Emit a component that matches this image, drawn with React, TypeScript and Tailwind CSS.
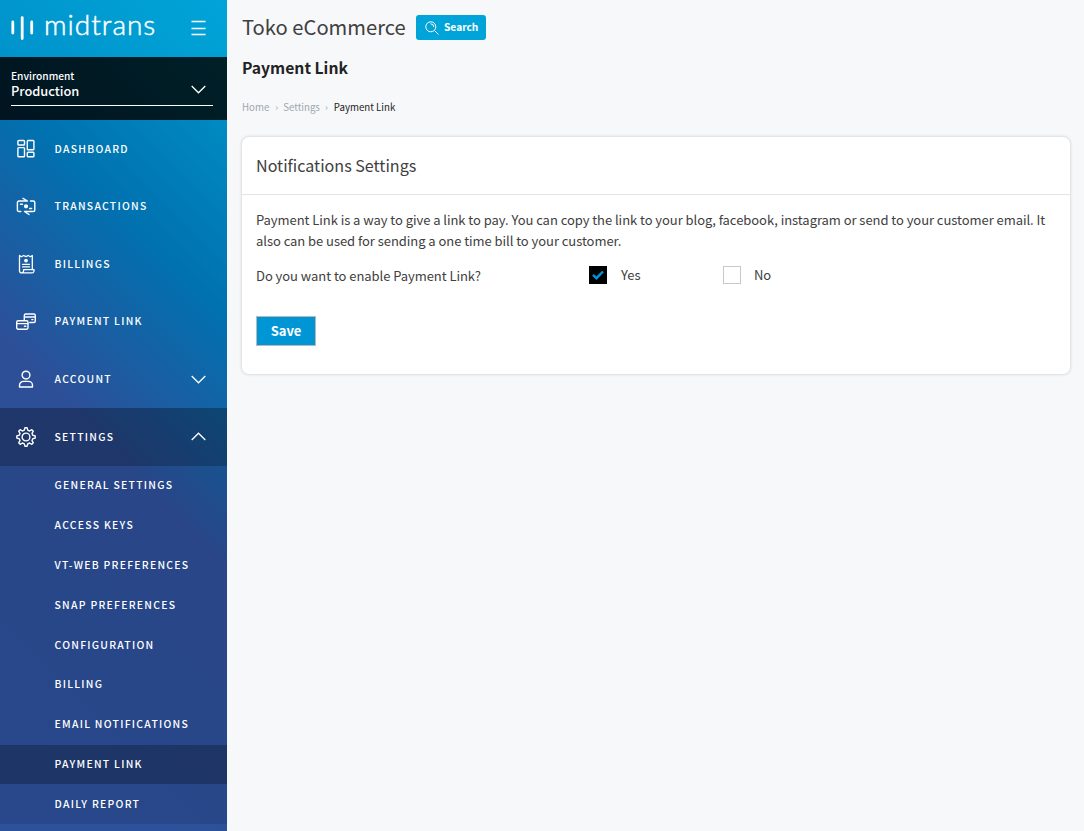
import type { ReactNode } from "react";

function Icon({ children }: { children: ReactNode }) {
  return (
    <svg
      className="h-5 w-5 shrink-0"
      viewBox="0 0 20 20"
      fill="none"
      stroke="currentColor"
      strokeWidth="1.4"
      strokeLinecap="round"
      strokeLinejoin="round"
    >
      {children}
    </svg>
  );
}

const icons = {
  dashboard: (
    <Icon>
      <rect x="1.900" y="1.500" width="6.600" height="4.500" rx="0.800" />
      <rect x="11.300" y="1.500" width="6.600" height="9.200" rx="0.800" />
      <rect x="1.900" y="8.600" width="6.600" height="9.200" rx="0.800" />
      <rect x="11.300" y="13.300" width="6.600" height="4.500" rx="0.800" />
    </Icon>
  ),
  transactions: (
    <Icon>
      <path d="M4.800 15.500H3A1.600 1.600 0 0 1 1.400 13.900V6.600A1.600 1.600 0 0 1 3 5H11.500L7 2.300" />
      <path d="M14.500 5H17.200a1.600 1.600 0 0 1 1.600 1.600v7.300a1.600 1.600 0 0 1-1.600 1.600H8.500l4.500 3" />
      <path d="M4.500 8.200h2M13.600 12.500h2" />
      <circle cx="10" cy="10.300" r="1.400" fill="currentColor" />
    </Icon>
  ),
  billings: (
    <Icon>
      <path d="M3.500 16V1.500l1.900 1.200 2.200-1.200 2.300 1.200 2.300-1.200 2.200 1.200 1.900-1.200V15.500" strokeWidth="1.300" />
      <path d="M3.500 16v.7a2 2 0 0 0 2 2.200H16a1.900 1.900 0 0 0 2-2v-1.200H7.600v1.100a2 2 0 0 1-2.100 2.100" strokeWidth="1.300" />
      <path d="M6.500 10.300h7M6.500 12.900h7" strokeWidth="1.200" />
      <circle cx="10" cy="6.600" r="1.200" fill="currentColor" />
    </Icon>
  ),
  link: (
    <Icon>
      <path d="M8.300 8V3.500A1.500 1.500 0 0 1 9.800 2h8A1.500 1.500 0 0 1 19.300 3.500v5.500A1.500 1.500 0 0 1 17.800 10.500h-4M8.300 5h11M15.800 7.600h1.200" />
      <rect x="0.700" y="8.800" width="11.300" height="8.400" rx="1.400" />
      <path d="M0.700 11.600h11.300M8.500 14.300h1.300" />
    </Icon>
  ),
  account: (
    <Icon>
      <circle cx="10" cy="6.100" r="3.900" />
      <path d="M3.500 18v-1.600a4 4 0 0 1 4-4h5a4 4 0 0 1 4 4v1.600z" />
    </Icon>
  ),
  settings: (
    <Icon>
      <circle cx="10" cy="10" r="3.900" />
      <path d="M8.900 0.800h2.200l.6 2.400 1.900.8 2.200-1.300 1.500 1.500-1.300 2.200.8 1.900 2.400.6v2.200l-2.400.6-.8 1.900 1.300 2.200-1.500 1.500-2.200-1.300-1.900.8-.6 2.400H8.900l-.6-2.400-1.900-.8-2.200 1.300-1.500-1.500L4 13.600l-.8-1.900-2.400-.6V8.900l2.400-.6L4 6.400 2.700 4.200l1.500-1.500L6.400 4l1.900-.8z" />
    </Icon>
  ),
};

function Chevron({ up = false }: { up?: boolean }) {
  return (
    <svg className="h-[9px] w-[15px] shrink-0" viewBox="0 0 15 9" fill="none" stroke="currentColor" strokeWidth="1.3">
      <path d={up ? "M.7 8 7.500 1.200 14.300 8" : "M.7 1 7.500 7.800 14.300 1"} />
    </svg>
  );
}

const menu = [
  { label: "DASHBOARD", icon: icons.dashboard },
  { label: "TRANSACTIONS", icon: icons.transactions },
  { label: "BILLINGS", icon: icons.billings },
  { label: "PAYMENT LINK", icon: icons.link },
  { label: "ACCOUNT", icon: icons.account, chevron: "down" },
  { label: "SETTINGS", icon: icons.settings, chevron: "up" },
];

const submenu = [
  "GENERAL SETTINGS",
  "ACCESS KEYS",
  "VT-WEB PREFERENCES",
  "SNAP PREFERENCES",
  "CONFIGURATION",
  "BILLING",
  "EMAIL NOTIFICATIONS",
  "PAYMENT LINK",
  "DAILY REPORT",
];

function Sidebar() {
  return (
    <aside className="flex w-[227px] shrink-0 flex-col overflow-hidden bg-[linear-gradient(45deg,#2d519b_0px,#2d4f98_350px,#0072b0_527px,#009acf_748px)] text-white">
      <div className="flex h-[57px] shrink-0 items-center bg-[linear-gradient(45deg,#0093cb,#00a4d8)] pl-[11px] pr-[21px]">
        <svg className="mt-[-2px] h-6 w-[23px] shrink-0" viewBox="0 0 23 24" stroke="white" strokeWidth="2.800" strokeLinecap="round">
          <path d="M1.800 6v11M11.200 1.600v21M20.700 6v11" />
        </svg>
        <span className="ml-[10px] mt-[-9px] w-[114px] whitespace-nowrap font-['Lato'] text-[28px] font-light leading-none tracking-[1px] [-webkit-text-stroke:0.5px_white]">midtrans</span>
        <svg className="ml-auto mt-[-1px] h-4 w-[15px]" viewBox="0 0 15 16" stroke="white" strokeWidth="1.300">
          <path d="M.5 1.500h14M.5 8.500h14M.5 14.500h14" />
        </svg>
      </div>
      <div className="h-[63px] shrink-0 bg-[linear-gradient(45deg,#001420,#002028)] pl-[11px] pr-[14px] pt-3">
        <div className="flex h-[37px] items-start justify-between border-b border-white pr-[7px]">
          <div className="mt-[-1px] flex flex-col">
            <span className="text-[10.200px] font-medium leading-[15px]">Environment</span>
            <span className="text-[12.800px] font-medium leading-[15px]">Production</span>
          </div>
          <div className="pt-[16px]"><Chevron /></div>
        </div>
      </div>
      <nav className="shrink-0">
        {menu.map((m) => (
          <div
            key={m.label}
            className={`flex items-center pl-4 pr-[21px] ${m.chevron === "up" ? "h-[58px] bg-black/30" : "h-[57.6px]"}`}
          >
            {m.icon}
            <span className="ml-[18.500px] flex-1 pb-[0.6px] text-[10.400px] font-medium tracking-[1.280px]">{m.label}</span>
            {m.chevron && <Chevron up={m.chevron === "up"} />}
          </div>
        ))}
      </nav>
      <div className="shrink-0 bg-black/10">
        {submenu.map((s, i) => (
          <div
            key={s}
            className={`flex h-[39.8px] items-center pb-[1.4px] pl-[54.5px] text-[10.400px] font-medium tracking-[1.280px] ${i === 7 ? "bg-black/25" : ""}`}
          >
            {s}
          </div>
        ))}
      </div>
    </aside>
  );
}

export default function App() {
  return (
    <div className="flex h-[831px] w-[1084px] overflow-hidden bg-[#f7f8fa] font-['Noto_Sans_CJK_SC','Noto_Sans',sans-serif] text-[#404040]">
      <Sidebar />
      <main className="flex min-w-0 flex-1 flex-col pl-[14px] pr-[13px]">
        <header className="mt-[15px] flex h-[25px] items-center pl-px">
          <h1 className="w-[163px] whitespace-nowrap pb-[2px] text-[20.200px] leading-[25px]">Toko eCommerce</h1>
          <button className="ml-[11px] flex h-[25px] w-[70px] items-center rounded-[3px] bg-[#00a4d8] pl-[9px] text-white">
            <svg className="h-[14px] w-[14px]" viewBox="0 0 14 14" fill="none" stroke="white" strokeWidth="1">
              <circle cx="5.800" cy="5.800" r="5" />
              <path d="M5.500 2.800a3.200 3.200 0 0 1 3.300 3.300M9.500 9.500l4 4" />
            </svg>
            <span className="ml-[5px] mt-[-1px] text-[10.200px] font-bold">Search</span>
          </button>
        </header>
        <h2 className="mt-[15px] pl-px text-[15.700px] font-bold leading-[26px] text-[#222]">Payment Link</h2>
        <div className="mt-[18px] flex h-4 items-center pl-px text-[9.700px] text-[#9ca7ae]">
          <span>Home</span>
          <span className="ml-[6px] mr-[5px]">›</span>
          <span>Settings</span>
          <span className="ml-[5px] mr-[6px]">›</span>
          <span className="text-[#222]">Payment Link</span>
        </div>
        <section className="mt-[21px] h-[239px] rounded-[8px] border border-[#e3e4e5] bg-white shadow-[0_0_3px_rgba(0,0,0,0.1)]">
          <div className="flex h-[58px] items-center border-b border-[#e3e4e5] px-[14px] text-[16.100px]">Notifications Settings</div>
          <div className="px-[14px] pt-[14px] text-[13px] leading-[21px] tracking-[-0.050px]">
            <p className="whitespace-nowrap">
              Payment Link is a way to give a link to pay. You can copy the link to your blog, facebook, instagram or send to your customer email. It
              <br />
              also can be used for sending a one time bill to your customer.
            </p>
            <div className="mt-[13px] flex h-[22px] items-center">
              <span className="w-[333px] pt-px">Do you want to enable Payment Link?</span>
              <span className="flex w-[134px] items-center">
                <span className="flex h-[18px] w-[18px] items-center justify-center bg-black">
                  <svg className="h-[10px] w-3" viewBox="0 0 12 10" fill="none" stroke="#0096d6" strokeWidth="2.400">
                    <path d="M1 4.800 4.500 8.200 11 1.500" />
                  </svg>
                </span>
                <span className="ml-[14px] mt-[-1px]">Yes</span>
              </span>
              <span className="h-[18px] w-[18px] border border-[#c8c8c8] bg-white" />
              <span className="ml-[13px] mt-[-1px]">No</span>
            </div>
            <button className="mt-[30px] flex h-[30px] w-[60px] items-center justify-center border border-[#b8b8b8] bg-[#0096d6] pb-px text-[13px] font-bold text-white">
              Save
            </button>
          </div>
        </section>
      </main>
    </div>
  );
}
